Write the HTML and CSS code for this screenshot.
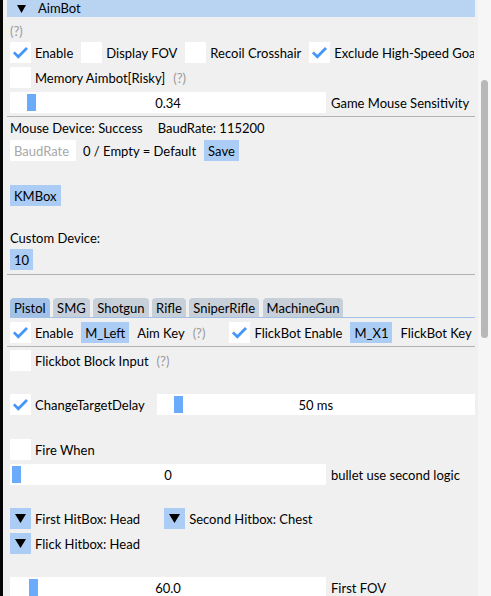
FILE: index.html
```html
<!DOCTYPE html>
<html>
<head>
<meta charset="utf-8">
<link rel="stylesheet" href="styles.css">
</head>
<body>
<div class="desk">
  <div class="win">
    <div class="content">
      <div class="header"><svg class="tri" width="9" height="8" viewBox="0 0 9 8"><polygon points="0,0 9,0 4.5,8" fill="#000"/></svg><span>AimBot</span></div>

      <div class="text help m-help">(?)</div>

      <div class="row m3">
        <div class="cb"><i class="box"><svg viewBox="0 0 21 21"><polyline points="3.9,10.4 8.3,14.8 17,6" /></svg></i><span class="t">Enable</span></div>
        <div class="cb"><i class="box"></i><span class="t">Display FOV</span></div>
        <div class="cb"><i class="box"></i><span class="t">Recoil Crosshair</span></div>
        <div class="cb"><i class="box"><svg viewBox="0 0 21 21"><polyline points="3.9,10.4 8.3,14.8 17,6" /></svg></i><span class="t clip">Exclude High-Speed Goal</span></div>
      </div>

      <div class="row m4">
        <div class="cb"><i class="box"></i><span class="t">Memory Aimbot[Risky]</span></div>
        <span class="t help">(?)</span>
      </div>

      <div class="row m4 srow">
        <div class="slider"><i class="grab" style="left:17px"></i><span class="t val">0.34</span></div>
        <span class="t">Game Mouse Sensitivity</span>
      </div>

      <div class="sep m3"></div>

      <div class="text m4"><span>Mouse Device: Success</span><span class="baud">BaudRate: 115200</span></div>

      <div class="row m4">
        <span class="t input">BaudRate</span>
        <span class="t pad1">0 / Empty = Default</span>
        <span class="t btn">Save</span>
      </div>

      <div class="row m24">
        <span class="t btn">KMBox</span>
      </div>

      <div class="text m25">Custom Device:</div>

      <div class="row m3">
        <span class="t btn">10</span>
      </div>

      <div class="sep m4"></div>

      <div class="tabbar m23">
        <span class="tab active">Pistol</span>
        <span class="tab">SMG</span>
        <span class="tab">Shotgun</span>
        <span class="tab">Rifle</span>
        <span class="tab">SniperRifle</span>
        <span class="tab">MachineGun</span>
      </div>

      <div class="row m4">
        <div class="cb"><i class="box"><svg viewBox="0 0 21 21"><polyline points="3.9,10.4 8.3,14.8 17,6" /></svg></i><span class="t">Enable</span></div>
        <span class="t btn">M_Left</span>
        <span class="t">Aim Key</span>
        <span class="t help">(?)</span>
        <div class="cb far"><i class="box"><svg viewBox="0 0 21 21"><polyline points="3.9,10.4 8.3,14.8 17,6" /></svg></i><span class="t">FlickBot Enable</span></div>
        <span class="t btn">M_X1</span>
        <span class="t">FlickBot Key</span>
      </div>

      <div class="sep m3"></div>

      <div class="row m3">
        <div class="cb"><i class="box"></i><span class="t">Flickbot Block Input</span></div>
        <span class="t help">(?)</span>
      </div>

      <div class="row m23">
        <div class="cb"><i class="box"><svg viewBox="0 0 21 21"><polyline points="3.9,10.4 8.3,14.8 17,6" /></svg></i><span class="t">ChangeTargetDelay</span></div>
        <div class="slider wide"><i class="grab" style="left:17px"></i><span class="t val">50 ms</span></div>
      </div>

      <div class="row m24">
        <div class="cb"><i class="box"></i><span class="t">Fire When</span></div>
      </div>

      <div class="row m4 srow">
        <div class="slider"><i class="grab" style="left:2px"></i><span class="t val">0</span></div>
        <span class="t">bullet use second logic</span>
      </div>

      <div class="row m23">
        <div class="cb"><i class="abtn"><svg width="11" height="9" viewBox="0 0 11 9"><polygon points="0,0 11,0 5.5,9" fill="#000"/></svg></i><span class="t">First HitBox: Head</span></div>
        <div class="cb far2"><i class="abtn"><svg width="11" height="9" viewBox="0 0 11 9"><polygon points="0,0 11,0 5.5,9" fill="#000"/></svg></i><span class="t">Second Hitbox: Chest</span></div>
      </div>

      <div class="row m4">
        <div class="cb"><i class="abtn"><svg width="11" height="9" viewBox="0 0 11 9"><polygon points="0,0 11,0 5.5,9" fill="#000"/></svg></i><span class="t">Flick Hitbox: Head</span></div>
      </div>

      <div class="row m23 srow">
        <div class="slider"><i class="grab" style="left:19px"></i><span class="t val">60.0</span></div>
        <span class="t">First FOV</span>
      </div>
    </div>
    <div class="scroll"><div class="thumb"></div></div>
  </div>
</div>
</body>
</html>
```

FILE: styles.css
```css
html, body {
  margin: 0;
  padding: 0;
  background: #050505;
}
.desk {
  width: 491px;
  height: 596px;
  overflow: hidden;
  background: #050505;
  display: flex;
  align-items: flex-start;
}
.win {
  margin-left: 3px;
  flex: 1;
  display: flex;
  align-items: stretch;
  min-height: 596px;
  background: #f0f0f0;
  font-family: "Lato", "Open Sans", sans-serif;
  font-size: 13px;
  color: #000;
}
.content {
  width: 466px;
  padding-left: 7px;
  display: flex;
  flex-direction: column;
}
.content > * {
  flex: none;
}
.header {
  margin-left: -3px;
  margin-right: 1px;
  height: 17px;
  background: #b9d4f3;
  display: flex;
  align-items: center;
  line-height: 17px;
}
.header .tri {
  margin-left: 10px;
  margin-right: 12px;
}
.text {
  height: 15px;
  line-height: 15px;
  white-space: nowrap;
  display: flex;
}
.help { color: #9a9a9a; }
.m-help { margin-top: 7px; }
.m3 { margin-top: 3px; }
.m4 { margin-top: 4px; }
.m23 { margin-top: 23px; }
.m24 { margin-top: 24px; }
.m25 { margin-top: 25px; }
.row {
  height: 21px;
  display: flex;
  align-items: center;
  gap: 8px;
  white-space: nowrap;
}
.srow { gap: 5px; }
.t {
  display: block;
  box-sizing: border-box;
  height: 21px;
  padding-top: 2px;
  line-height: 19px;
}
.cb {
  display: flex;
  align-items: center;
  gap: 4px;
}
.box {
  width: 21px;
  height: 21px;
  background: #fff;
  display: block;
  flex: none;
}
.box svg {
  width: 21px;
  height: 21px;
  display: block;
}
.box polyline {
  fill: none;
  stroke: #4296fa;
  stroke-width: 2.7;
}
.clip {
  width: 140px;
  overflow: hidden;
}
.slider {
  position: relative;
  width: 316px;
  height: 21px;
  background: #fff;
  flex: none;
}
.slider.wide {
  width: 318px;
  margin-left: 4px;
}
.grab {
  position: absolute;
  top: 2px;
  width: 9px;
  height: 17px;
  background: #6aacfb;
}
.val {
  text-align: center;
  position: relative;
}
.sep {
  height: 1px;
  background: #b3b3b3;
  margin-left: -3px;
  margin-right: 1px;
}
.baud { margin-left: 15px; }
.input {
  width: 66px;
  background: #fff;
  color: #a8a8a8;
  padding-left: 4px;
}
.pad1 { margin-left: -1px; }
.btn {
  background: #abccf4;
  padding-left: 4px;
  padding-right: 4px;
}
.tabbar {
  height: 19px;
  display: flex;
  align-items: flex-end;
  gap: 3.5px;
  border-bottom: 1px solid #a3c1e7;
  margin-right: 1px;
  white-space: nowrap;
}
.tab {
  height: 19px;
  line-height: 20px;
  padding: 0 4px;
  background: #c7cfd9;
  border-radius: 4px 4px 0 0;
}
.tab.active { background: #a3c1e7; }
.far { margin-left: 16px; }
.far2 { margin-left: 16px; }
.abtn {
  width: 21px;
  height: 21px;
  background: #abccf4;
  display: flex;
  align-items: center;
  justify-content: center;
  flex: none;
}
.abtn svg { display: block; }
.scroll {
  width: 13px;
  margin-left: 2px;
  background: #f6f6f6;
  border-right: 1px solid #c4c4c4;
}
.thumb {
  margin-top: 80px;
  margin-left: 3px;
  width: 7px;
  height: 258px;
  background: #b8b8b8;
  border-radius: 4px;
}
```
